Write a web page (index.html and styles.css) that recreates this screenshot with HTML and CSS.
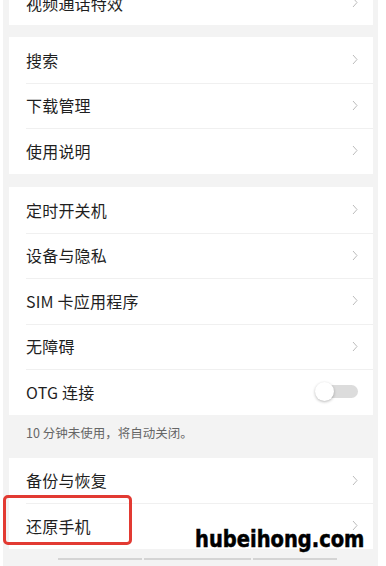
FILE: index.html
```html
<!DOCTYPE html>
<html lang="zh-CN">
<head>
<meta charset="utf-8">
<title>设置</title>
<link rel="stylesheet" href="styles.css">
</head>
<body>
<div class="screen">
  <div class="card card-top">
    <div class="row"><span class="label">视频通话特效</span><span class="chev"><svg width="6" height="11" viewBox="0 0 6 11"><polyline points="1,1 5,5.5 1,10" fill="none" stroke="#bcbcbc" stroke-width="1"/></svg></span></div>
  </div>
  <div class="card">
    <div class="row"><span class="label">搜索</span><span class="chev"><svg width="6" height="11" viewBox="0 0 6 11"><polyline points="1,1 5,5.5 1,10" fill="none" stroke="#bcbcbc" stroke-width="1"/></svg></span></div>
    <div class="row"><span class="label">下载管理</span><span class="chev"><svg width="6" height="11" viewBox="0 0 6 11"><polyline points="1,1 5,5.5 1,10" fill="none" stroke="#bcbcbc" stroke-width="1"/></svg></span></div>
    <div class="row"><span class="label">使用说明</span><span class="chev"><svg width="6" height="11" viewBox="0 0 6 11"><polyline points="1,1 5,5.5 1,10" fill="none" stroke="#bcbcbc" stroke-width="1"/></svg></span></div>
  </div>
  <div class="card">
    <div class="row"><span class="label">定时开关机</span><span class="chev"><svg width="6" height="11" viewBox="0 0 6 11"><polyline points="1,1 5,5.5 1,10" fill="none" stroke="#bcbcbc" stroke-width="1"/></svg></span></div>
    <div class="row"><span class="label">设备与隐私</span><span class="chev"><svg width="6" height="11" viewBox="0 0 6 11"><polyline points="1,1 5,5.5 1,10" fill="none" stroke="#bcbcbc" stroke-width="1"/></svg></span></div>
    <div class="row"><span class="label">SIM 卡应用程序</span><span class="chev"><svg width="6" height="11" viewBox="0 0 6 11"><polyline points="1,1 5,5.5 1,10" fill="none" stroke="#bcbcbc" stroke-width="1"/></svg></span></div>
    <div class="row"><span class="label">无障碍</span><span class="chev"><svg width="6" height="11" viewBox="0 0 6 11"><polyline points="1,1 5,5.5 1,10" fill="none" stroke="#bcbcbc" stroke-width="1"/></svg></span></div>
    <div class="row"><span class="label">OTG 连接</span><span class="toggle"><span class="knob"></span></span></div>
  </div>
  <div class="note">10 分钟未使用，将自动关闭。</div>
  <div class="card">
    <div class="row"><span class="label">备份与恢复</span><span class="chev"><svg width="6" height="11" viewBox="0 0 6 11"><polyline points="1,1 5,5.5 1,10" fill="none" stroke="#bcbcbc" stroke-width="1"/></svg></span></div>
    <div class="row"><span class="label">还原手机</span><span class="chev"><svg width="6" height="11" viewBox="0 0 6 11"><polyline points="1,1 5,5.5 1,10" fill="none" stroke="#bcbcbc" stroke-width="1"/></svg></span></div>
  </div>
  <div class="navbar">
    <span class="seg seg1"></span><span class="seg seg2"></span><span class="seg seg3"></span>
  </div>
  <div class="highlight"></div>
  <div class="watermark">hubeihong.com</div>
</div>
</body>
</html>
```

FILE: styles.css
```css
* { box-sizing: border-box; }
html, body {
  margin: 0;
  padding: 0;
  background: #ffffff;
  height: 566px;
  overflow: hidden;
}
.screen {
  position: relative;
  margin-left: 3px;
  width: 375px;
  height: 566px;
  background: #f3f3f3;
  padding: 0 5px 0 6px;
  font-family: "Noto Sans CJK SC", "Noto Sans", sans-serif;
  overflow: hidden;
}
.card {
  background: #ffffff;
  margin-bottom: 13.5px;
}
.card-top {
  margin-top: -20px;
  margin-bottom: 12px;
  height: 45px;
  overflow: hidden;
}
.row {
  height: 45.5px;
  display: flex;
  align-items: center;
  justify-content: space-between;
  padding: 0 15px 0 17px;
  position: relative;
}
.row + .row::before {
  content: "";
  position: absolute;
  left: 17px;
  right: 0;
  top: 0;
  height: 1px;
  background: #f0f0f0;
}
.label {
  font-size: 16px;
  color: #1f1f1f;
  letter-spacing: 0.2px;
}
.chev {
  display: flex;
  align-items: center;
}
.toggle {
  position: relative;
  width: 38px;
  height: 13px;
  border-radius: 7px;
  background: #dcdcdc;
  margin-right: 0;
}
.knob {
  position: absolute;
  left: -5px;
  top: -3px;
  width: 19px;
  height: 19px;
  border-radius: 50%;
  background: #ffffff;
  box-shadow: 0 1px 3px rgba(0,0,0,0.28);
}
.note {
  margin-top: -13.5px;
  height: 43px;
  padding: 8px 0 0 17px;
  font-size: 12.5px;
  color: #666666;
}
.navbar {
  position: relative;
  height: 20px;
  margin-top: -13.5px;
}
.seg {
  position: absolute;
  top: 9px;
  height: 2px;
  background: #d4d4d4;
}
.seg1 { left: 49px; width: 84px; }
.seg2 { left: 135px; width: 107px; }
.seg3 { left: 244px; width: 84px; }
.highlight {
  position: absolute;
  left: 0;
  top: 495px;
  width: 129px;
  height: 50px;
  border: 3px solid #e23a32;
  border-radius: 5px;
}
.watermark {
  position: absolute;
  left: 192px;
  top: 526px;
  font-family: "DejaVu Sans", sans-serif;
  font-weight: bold;
  font-size: 19.5px;
  letter-spacing: 0;
  color: #000000;
  transform: scaleY(1.15);
  transform-origin: left top;
  -webkit-text-stroke: 0.5px #000;
}
```
